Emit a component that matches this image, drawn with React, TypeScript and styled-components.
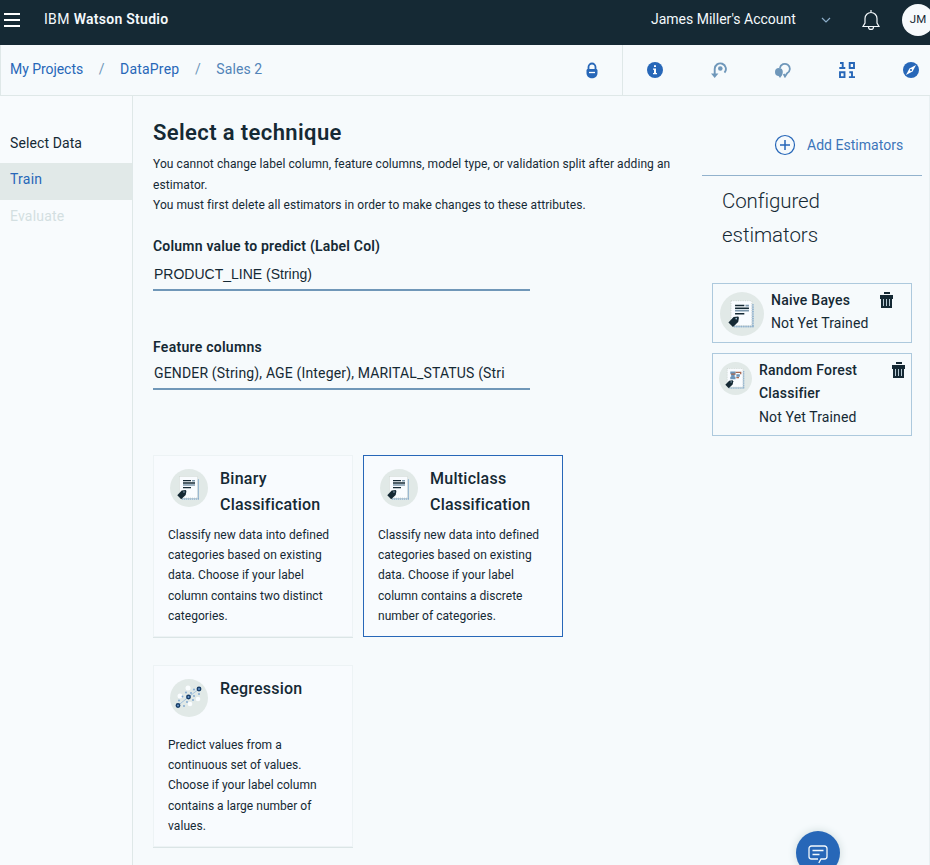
import React from "react";
import styled, { createGlobalStyle } from "styled-components";

const navy = "#152934";
const blue = "#2767b8";
const steel = "#6f97ba";
const line = "#dfe8e8";
const paper = "#f6fafc";

const GlobalStyle = createGlobalStyle`
  *, *::before, *::after { box-sizing: border-box; }
  body { margin: 0; background: ${paper}; color: ${navy}; font: 14px/20px Roboto, "Liberation Sans", sans-serif; }
  svg { display: block; flex: none; }
`;

const Page = styled.div`
  width: 930px;
  height: 865px;
  overflow: hidden;
  position: relative;
  display: grid;
  grid-template-rows: 45px 51px 1fr;
`;

const Spaced = styled.span<{ $ls: number }>`
  letter-spacing: ${p => p.$ls}px;
  white-space: nowrap;
`;

/* Top bar */
const TopBar = styled.header`
  display: flex;
  align-items: flex-start;
  overflow: hidden;
  background: ${navy};
  color: #f4f9fc;
`;
const Burger = styled.div`
  width: 16px;
  height: 14px;
  margin: 13px 24px 0 4px;
  display: flex;
  flex-direction: column;
  justify-content: space-between;
  &::before, &::after, & > i { content: ""; height: 2px; background: #fff; }
`;
const Brand = styled.div`
  flex: 1;
  display: flex;
  gap: 4px;
  padding-top: 9px;
  b { font-weight: 600; }
`;
const Account = styled.div`
  display: flex;
  width: 211px;
  padding-top: 9px;
`;
const Chevron = styled.svg`margin: 8px 0 0 25px;`;
const Bell = styled.svg`margin-top: 10px;`;
const Avatar = styled.div`
  flex: none;
  width: 32px;
  height: 32px;
  margin: 4px -4px 0 22px;
  border-radius: 50%;
  background: ${paper};
  color: ${navy};
  font-size: 11.5px;
  font-weight: 400;
  line-height: 31px;
  text-align: center;
`;

/* Breadcrumb bar */
const SubBar = styled.nav`
  display: flex;
  overflow: hidden;
  border-bottom: 1px solid ${line};
  border-left: 1px solid ${line};
`;
const Crumbs = styled.div`
  flex: 1;
  display: flex;
  padding: 14px 0 0 9px;
  color: ${blue};
`;
const Slash = styled.span`
  width: 37px;
  text-align: center;
  color: ${steel};
`;
const Current = styled.span`color: #5284b8;`;
const LockCell = styled.div`
  width: 62px;
  display: flex;
  justify-content: center;
  padding-top: 17px;
  border-right: 1px solid ${line};
`;
const Tools = styled.div`
  display: flex;
  width: 307px;
`;
const Tool = styled.div`
  flex: none;
  width: 64px;
  display: flex;
  justify-content: center;
  padding-top: 17px;
`;

/* Body */
const Body = styled.div`
  display: grid;
  grid-template-columns: 133px 1fr 220px 7px;
  min-height: 0;
  border-right: 1px solid #e9f0f2;
`;
const Side = styled.aside`
  padding-top: 30.5px;
  border-right: 1px solid ${line};
  background: #f8fbfd;
`;
const Step = styled.div<{ $tone: string; $active?: boolean }>`
  height: 36.5px;
  padding-left: 10px;
  line-height: 33px;
  color: ${p => p.$tone};
  background: ${p => (p.$active ? "#e1e9e8" : "transparent")};
`;
const Main = styled.main`padding: 22.5px 0 0 20px;`;
const Title = styled.h1`
  margin: 0;
  font-size: 22px;
  font-weight: 600;
  line-height: 28px;
`;
const Intro = styled.div`
  margin: 7.5px 0 20px;
  font-size: 12px;
  line-height: 20.5px;
`;
const Field = styled.div<{ $height: number; $after: number; $face?: string }>`
  width: 377px;
  height: ${p => p.$height}px;
  margin-bottom: ${p => p.$after}px;
  display: flex;
  flex-direction: column;
  border-bottom: 2px solid #7097b8;
  b { font-weight: 600; }
  p { margin: auto 0 3px; padding-left: 1px; line-height: 24px; font-family: ${p => p.$face || "inherit"}; }
`;
const Cards = styled.div`
  display: grid;
  grid-template-columns: 200px 200px;
  grid-auto-rows: 182px;
  gap: 28px 10px;
`;
const Card = styled.section<{ $selected?: boolean }>`
  padding: 10px 0 0 14px;
  background: #f8fbfe;
  border: 1px solid ${p => (p.$selected ? blue : "#edf3f5")};
  ${p => !p.$selected && "box-shadow: 0 1px 0 #dbe5e6;"}
`;
const CardHead = styled.div`
  display: flex;
  height: 59px;
  gap: 12px;
  padding-left: 2px;
  font-size: 16px;
  font-weight: 500;
  line-height: 26px;
  svg { margin-top: 3px; }
`;
const CardText = styled.div`
  font-size: 12px;
  line-height: 20.36px;
`;

/* Estimator column */
const Estimators = styled.aside`display: flex; flex-direction: column;`;
const AddRow = styled.div`
  display: flex;
  align-items: center;
  gap: 11px;
  height: 80px;
  padding: 18px 0 0 72px;
  border-bottom: 1px solid #92b2cd;
  color: #3c75b9;
`;
const Heading = styled.h2`
  margin: 8px 0 31px 20px;
  font-size: 20.5px;
  font-weight: 300;
  line-height: 34px;
`;
const Estimator = styled.article<{ $height: number; $left: number; $right: number }>`
  width: 200px;
  height: ${p => p.$height}px;
  margin: 0 0 10px 10px;
  padding: 5px ${p => p.$right}px 0 ${p => p.$left}px;
  display: flex;
  gap: 7px;
  border: 1px solid #adc9dd;
  line-height: 23.4px;
  svg { margin-top: 3px; }
`;
const EstimatorText = styled.div`
  flex: 1;
  b { font-weight: 500; }
`;

const Chat = styled.button`
  position: absolute;
  left: 796px;
  top: 831px;
  width: 44px;
  height: 44px;
  display: flex;
  align-items: flex-start;
  padding: 14px 0 0 12px;
  border: 0;
  border-radius: 50%;
  background: ${blue};
  box-shadow: 0 0 8px #cbd9da;
`;

const DocIcon = ({ size, chart }: { size: number; chart?: boolean }) => (
  <svg width={size} height={size} viewBox="0 0 38 38">
    <circle cx="19" cy="19" r="19" fill="#e1e9e7" />
    <path d="M12 10.500h17v20H12z" fill="#b7cddd" />
    <path d="M28.500 10.500v20M12 30h17" fill="none" stroke="#7fa5c6" strokeDasharray="1 1" />
    <path d="M9.500 7.500h18V29h-18z" fill="#f9fcff" stroke="#c9cfca" strokeWidth=".7" strokeDasharray="1 1" />
    {chart ? (
      <>
        <path d="M13 11h6v3h-6zM13 17h6v3h-6zM20 14h4v3h-4zM14 14h4v3h-4z" fill="#6d94b8" />
        <path d="M14 14h5M19 12h6v2M20 18h3" fill="none" stroke="#a8674f" strokeWidth="1.500" />
      </>
    ) : (
      <>
        <path d="M13 11.700h8M13 14h12M13 18.700h8" stroke={navy} strokeWidth="1.300" />
        <path d="M22 11.700h3M13 16.100h12" stroke="#7d97ac" strokeWidth="1.500" />
      </>
    )}
    <path d="M7.300 26.300l4.400-4.700 4-.5.700 1-.7 3.900-4.500 4.300z" fill={navy} />
    <circle cx="14" cy="23" r=".7" fill="#a9c4dc" />
  </svg>
);

const RegressionIcon = () => (
  <svg width="38" height="38" viewBox="0 0 38 38">
    <circle cx="19" cy="19" r="19" fill="#e1e9e7" />
    <g fill="#fafdff">
      <circle cx="18" cy="9" r="2.500" /><circle cx="10" cy="17" r="2.500" /><circle cx="20" cy="25" r="2.300" /><circle cx="28" cy="20" r="2.300" />
    </g>
    <path d="M8 26.500L18.500 18 29 10" stroke="#9dbddb" strokeWidth=".9" fill="none" />
    <g fill="#7ba5d0">
      <circle cx="12.500" cy="17.500" r=".9" /><circle cx="16" cy="13.500" r=".9" /><circle cx="24" cy="10.500" r=".9" /><circle cx="21" cy="14" r=".9" />
      <circle cx="24" cy="17" r=".9" /><circle cx="29" cy="15" r=".9" /><circle cx="23" cy="21" r=".9" /><circle cx="17" cy="23" r=".9" />
      <circle cx="14" cy="27" r=".9" /><circle cx="9" cy="21.500" r=".9" />
    </g>
    <g fill="#6b9bd0" stroke="#173d68" strokeWidth="1.500">
      <circle cx="8" cy="26.500" r="1.700" /><circle cx="18.500" cy="18" r="1.700" /><circle cx="29" cy="10" r="1.700" />
    </g>
  </svg>
);

const Trash = () => (
  <svg width="13" height="16" viewBox="0 0 13 16">
    <path d="M4 0h6v2H4zM0 3h13v4H0zM1 6h11v10H1z" fill={navy} />
    <path d="M3.500 7v7M6.500 7v7M9.500 7v7" stroke="#b7c9d3" strokeWidth="1" />
  </svg>
);

const Lines = ({ items }: { items: [string, number][] }) => (
  <>{items.map(([text, ls]) => <div key={text}><Spaced $ls={ls}>{text}</Spaced></div>)}</>
);

export default function App() {
  return (
    <Page>
      <GlobalStyle />
      <TopBar>
        <Burger><i /></Burger>
        <Brand><Spaced $ls={0.3}>IBM</Spaced><b><Spaced $ls={0.27}>Watson Studio</Spaced></b></Brand>
        <Account>
          <Spaced $ls={0}>James Miller's Account</Spaced>
          <Chevron width="10" height="7" viewBox="0 0 10 7"><path d="M1 1l4 4 4-4" fill="none" stroke="#8cadc9" strokeWidth="1.2" /></Chevron>
        </Account>
        <Bell width="18" height="21" viewBox="0 0 18 21" fill="none" stroke="#f4f9fc" strokeWidth="1.2">
          <path d="M9 0v2.500M1 16.500h16L15 13V8.500a6 6 0 0 0-12 0V13zM6.500 17c0 3.300 5 3.300 5 0" />
        </Bell>
        <Avatar>JM</Avatar>
      </TopBar>

      <SubBar>
        <Crumbs>
          <Spaced $ls={-0.05}>My Projects</Spaced><Slash>/</Slash>
          <Spaced $ls={0.18}>DataPrep</Spaced><Slash>/</Slash>
          <Current><Spaced $ls={0.1}>Sales 2</Spaced></Current>
        </Crumbs>
        <LockCell>
          <svg width="12" height="17" viewBox="0 0 12 17">
            <path d="M2.500 8V5a3.500 3.500 0 0 1 7 0v3" fill="none" stroke={blue} strokeWidth="1.800" />
            <path d="M.5 8.500c0-1 .7-1.500 1.500-1.500h8c.8 0 1.500.5 1.500 1.500V11c0 7-11 7-11 0z" fill={blue} />
            <path d="M3 10.500h6" stroke="#fff" strokeWidth="1.300" />
          </svg>
        </LockCell>
        <Tools>
          <Tool>
            <svg width="16" height="16" viewBox="0 0 16 16">
              <circle cx="8" cy="8" r="8" fill={blue} />
              <path d="M7 3.300h2v1.800H7zM6 6.500h3V11h1v1.300H6V11h1V7.800H6z" fill="#fff" />
            </svg>
          </Tool>
          <Tool>
            <svg width="16" height="16" viewBox="0 0 16 16">
              <path d="M3.700 13V7a5.600 5.600 0 1 1 9.800 3.700" fill="none" stroke={steel} strokeWidth="1.900" />
              <path d="M0 11.500h7.400L3.700 16z" fill={steel} /><circle cx="9.300" cy="6.500" r="2.300" fill={steel} />
            </svg>
          </Tool>
          <Tool>
            <svg width="16" height="16" viewBox="0 0 16 16">
              <path d="M4.900 6a5 5 0 1 1 7.200 5.300L10 14.500 8.700 12" fill="none" stroke={steel} strokeWidth="1.800" />
              <circle cx="3.900" cy="10" r="3.900" fill={steel} /><path d="M2.500 12.500h5L5 16z" fill={steel} />
            </svg>
          </Tool>
          <Tool>
            <svg width="16" height="16" viewBox="0 0 16 16" fill="none" stroke={blue} strokeWidth="1.900">
              <path d="M1 1h2.700v5M.3 6h6M10.700 1H15v5h-4.300zM1 10.200h4.500v5H1zM10.300 10.200H13v5M9.900 15.100H16" />
            </svg>
          </Tool>
          <Tool>
            <svg width="16" height="16" viewBox="0 0 16 16">
              <circle cx="8" cy="8" r="8" fill={blue} /><path d="M13 3L9.600 9.600 3 13l3.400-6.600z" fill="#fff" /><circle cx="8" cy="8" r="1.100" fill={blue} />
            </svg>
          </Tool>
        </Tools>
      </SubBar>

      <Body>
        <Side>
          <Step $tone={navy}><Spaced $ls={0.1}>Select Data</Spaced></Step>
          <Step $tone={blue} $active><Spaced $ls={0.25}>Train</Spaced></Step>
          <Step $tone="#d3dfe1"><Spaced $ls={0.2}>Evaluate</Spaced></Step>
        </Side>

        <Main>
          <Title><Spaced $ls={0.38}>Select a technique</Spaced></Title>
          <Intro>
            <Lines items={[
              ["You cannot change label column, feature columns, model type, or validation split after adding an", 0.075],
              ["estimator.", 0.09],
              ["You must first delete all estimators in order to make changes to these attributes.", 0.065],
            ]} />
          </Intro>
          <Field $height={55} $after={46} $face={'"Liberation Sans", sans-serif'}>
            <b><Spaced $ls={0.2}>Column value to predict (Label Col)</Spaced></b>
            <p><Spaced $ls={0}>PRODUCT_LINE (String)</Spaced></p>
          </Field>
          <Field $height={53} $after={65}>
            <b><Spaced $ls={0.27}>Feature columns</Spaced></b>
            <p><Spaced $ls={0.155}>GENDER (String), AGE (Integer), MARITAL_STATUS (Stri</Spaced></p>
          </Field>
          <Cards>
            <Card>
              <CardHead><DocIcon size={38} /><div><Lines items={[["Binary", 0.26], ["Classification", 0.19]]} /></div></CardHead>
              <CardText><Lines items={[
                ["Classify new data into defined", 0.03], ["categories based on existing", 0.03], ["data. Choose if your label", 0.03],
                ["column contains two distinct", 0.02], ["categories.", 0.03],
              ]} /></CardText>
            </Card>
            <Card $selected>
              <CardHead><DocIcon size={38} /><div><Lines items={[["Multiclass", 0.26], ["Classification", 0.19]]} /></div></CardHead>
              <CardText><Lines items={[
                ["Classify new data into defined", 0.03], ["categories based on existing", 0.03], ["data. Choose if your label", 0.03],
                ["column contains a discrete", 0.02], ["number of categories.", 0.03],
              ]} /></CardText>
            </Card>
            <Card>
              <CardHead><RegressionIcon /><div><Lines items={[["Regression", 0.2]]} /></div></CardHead>
              <CardText><Lines items={[
                ["Predict values from a", 0.03], ["continuous set of values.", 0], ["Choose if your label column", 0.02],
                ["contains a large number of", 0.02], ["values.", 0.07],
              ]} /></CardText>
            </Card>
          </Cards>
        </Main>

        <Estimators>
          <AddRow>
            <svg width="22" height="22" viewBox="0 0 22 22" fill="none" stroke={blue} strokeWidth="1.200">
              <circle cx="11" cy="11" r="9.500" /><path d="M11 6v10M6 11h10" strokeWidth="1.500" />
            </svg>
            <Spaced $ls={0.03}>Add Estimators</Spaced>
          </AddRow>
          <Heading><Lines items={[["Configured", -0.1], ["estimators", -0.05]]} /></Heading>
          <Estimator $height={60} $left={7} $right={18}>
            <DocIcon size={44} />
            <EstimatorText><b><Spaced $ls={0.24}>Naive Bayes</Spaced></b><br /><Spaced $ls={0.13}>Not Yet Trained</Spaced></EstimatorText>
            <Trash />
          </Estimator>
          <Estimator $height={83} $left={6} $right={6}>
            <DocIcon size={33} chart />
            <EstimatorText><b><Spaced $ls={0.22}>Random Forest</Spaced><br /><Spaced $ls={0.2}>Classifier</Spaced></b><br /><Spaced $ls={0.13}>Not Yet Trained</Spaced></EstimatorText>
            <Trash />
          </Estimator>
        </Estimators>
      </Body>

      <Chat aria-label="Chat">
        <svg width="20" height="20" viewBox="0 0 20 20" fill="none" stroke="#f4f9fc" strokeWidth="1.300">
          <path d="M10 14H3.500A2.500 2.500 0 0 1 1 11.500v-8A2.500 2.500 0 0 1 3.500 1h13A2.500 2.500 0 0 1 19 3.500v8a2.500 2.500 0 0 1-2.500 2.500H13l-2.200 4M4.500 5.500h11M4.500 9.500h7" />
        </svg>
      </Chat>
    </Page>
  );
}
